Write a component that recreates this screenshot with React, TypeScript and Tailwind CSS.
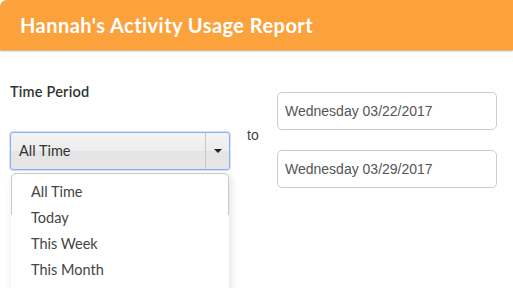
import { useState } from "react";

const periods = ["All Time", "Today", "This Week", "This Month"];

export default function App() {
  const [period, setPeriod] = useState("All Time");

  return (
    <main className="w-[513px] h-[288px] overflow-hidden bg-white font-['Lato',sans-serif]">
      {/* Header */}
      <header className="h-[50px] bg-[#fba23c] rounded-tl-[7px] shadow-[0_1px_2px_rgba(160,90,20,0.6)] pl-5 flex items-center">
        <h1 className="text-[20px] font-bold text-white tracking-[0.45px]">Hannah's Activity Usage Report</h1>
      </header>

      <div className="flex pt-[33px]">
        {/* Time period select */}
        <div className="w-[237px] pl-[10px]">
          <div className="text-[14.5px] font-semibold text-[#333] leading-[18px] tracking-[0.2px]">Time Period</div>
          <div className="relative mt-[31px] w-[220px]">
            <div className="h-[38px] flex border border-[#88aff0] rounded-[3px] overflow-hidden bg-[linear-gradient(#f3f3f3_0%,#ededed_50%,#e4e4e4_50%,#e7e7e7_100%)] shadow-[0_0_0_1px_rgba(136,175,240,0.35)]">
              <div className="flex-1 flex items-center pl-2 text-[14.5px] text-[#333]">{period}</div>
              <div className="w-[24px] border-l border-[#c8c8c8] flex items-center justify-center">
                <span className="w-0 h-0 border-l-[4px] border-r-[4px] border-t-[4px] border-l-transparent border-r-transparent border-t-[#222]" />
              </div>
            </div>
            {/* Open menu */}
            <ul className="absolute left-[1px] top-[41px] w-[218px] h-[120px] rounded-t-[5px] bg-white shadow-[2px_3px_8px_rgba(0,0,0,0.12)] pt-[6px]">
              <div className="absolute inset-x-0 top-0 h-[42px] border border-b-0 border-[#c9c9c9] rounded-t-[5px] pointer-events-none" />
              {periods.map((p) => (
                <li
                  key={p}
                  onClick={() => setPeriod(p)}
                  className="h-[26px] pl-5 flex items-center text-[14.5px] text-[#444] cursor-pointer"
                >
                  {p}
                </li>
              ))}
            </ul>
          </div>
        </div>

        <div className="w-[40px] pl-[10px] pt-[43px] text-[14px] text-[#444] leading-[18px] font-['Liberation_Sans',Arial,sans-serif]">to</div>

        {/* Date range */}
        <div className="flex flex-col gap-[20px] pt-[9px]">
          {["Wednesday 03/22/2017", "Wednesday 03/29/2017"].map((d) => (
            <input
              key={d}
              defaultValue={d}
              className="w-[220px] h-[38px] border border-[#cccccc] rounded-[5px] px-[7px] text-[14px] text-[#555] font-['Liberation_Sans',Arial,sans-serif] outline-none"
            />
          ))}
        </div>
      </div>
    </main>
  );
}
